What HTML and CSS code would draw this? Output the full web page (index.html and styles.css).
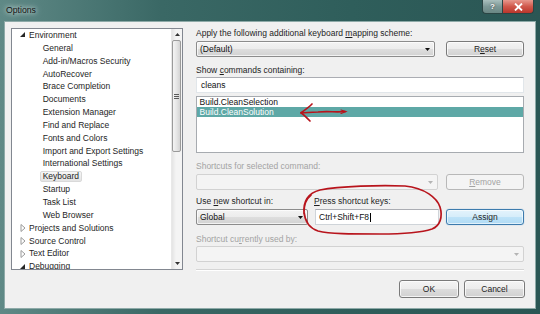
FILE: index.html
```html
<!DOCTYPE html>
<html>
<head>
<meta charset="utf-8">
<link rel="stylesheet" href="styles.css">
</head>
<body>
<div class="window">
  <div class="titlebar">
    <span class="title">Options</span>
    <div class="caption">
      <div class="cbtn help">?</div>
      <div class="cbtn close"><svg width="9" height="8" viewBox="0 0 9 8"><path d="M1 0.5 L8 7.5 M8 0.5 L1 7.5" stroke="#fff" stroke-width="1.8"/></svg></div>
    </div>
  </div>
  <div class="client">
    <div class="main">
      <div class="tree">
        <div class="tree-items">
          <div class="row l0"><svg class="exp" width="6" height="6" viewBox="0 0 6 6"><polygon points="5,0 5,5 0,5" fill="#262626"/></svg><span>Environment</span></div>
          <div class="row l1">General</div>
          <div class="row l1">Add-in/Macros Security</div>
          <div class="row l1">AutoRecover</div>
          <div class="row l1">Brace Completion</div>
          <div class="row l1">Documents</div>
          <div class="row l1">Extension Manager</div>
          <div class="row l1">Find and Replace</div>
          <div class="row l1">Fonts and Colors</div>
          <div class="row l1">Import and Export Settings</div>
          <div class="row l1">International Settings</div>
          <div class="row l1"><span class="sel">Keyboard</span></div>
          <div class="row l1">Startup</div>
          <div class="row l1">Task List</div>
          <div class="row l1">Web Browser</div>
          <div class="row l0"><svg class="exp" width="6" height="8" viewBox="0 0 6 8"><polygon points="1,0.5 5,4 1,7.5" fill="none" stroke="#9a9a9a" stroke-width="1"/></svg><span>Projects and Solutions</span></div>
          <div class="row l0"><svg class="exp" width="6" height="8" viewBox="0 0 6 8"><polygon points="1,0.5 5,4 1,7.5" fill="none" stroke="#9a9a9a" stroke-width="1"/></svg><span>Source Control</span></div>
          <div class="row l0"><svg class="exp" width="6" height="8" viewBox="0 0 6 8"><polygon points="1,0.5 5,4 1,7.5" fill="none" stroke="#9a9a9a" stroke-width="1"/></svg><span>Text Editor</span></div>
          <div class="row l0"><svg class="exp" width="6" height="6" viewBox="0 0 6 6"><polygon points="5,0 5,5 0,5" fill="#262626"/></svg><span>Debugging</span></div>
        </div>
        <div class="vscroll">
          <div class="sarrow"><svg width="5" height="3" viewBox="0 0 5 3"><polygon points="0,3 5,3 2.5,0" fill="#333"/></svg></div>
          <div class="thumb"><div class="grip"></div></div>
          <div class="track"></div>
          <div class="sarrow"><svg width="5" height="3" viewBox="0 0 5 3"><polygon points="0,0 5,0 2.5,3" fill="#333"/></svg></div>
        </div>
      </div>
      <div class="panel">
        <div class="lbl">Apply the following additional keyboard <u>m</u>apping scheme:</div>
        <div class="crow r1">
          <div class="combo w239"><span>(Default)</span><svg width="5" height="3" viewBox="0 0 5 3"><polygon points="0,0 5,0 2.5,3" fill="#111"/></svg></div>
          <div class="btn w78">R<u>e</u>set</div>
        </div>
        <div class="lbl m7">Show <u>c</u>ommands containing:</div>
        <div class="input m1">cleans</div>
        <div class="list">
          <div class="item">Build.CleanSelection</div>
          <div class="item hi">Build.CleanSolution</div>
        </div>
        <div class="lbl dis m7">Shortcuts for selected command:</div>
        <div class="crow r1">
          <div class="combo disabled w242"><span></span><svg width="5" height="3" viewBox="0 0 5 3"><polygon points="0,0 5,0 2.5,3" fill="#b4b4b4"/></svg></div>
          <div class="btn disabled w78"><u>R</u>emove</div>
        </div>
        <div class="grid3">
          <div class="lbl">Use <u>n</u>ew shortcut in:</div>
          <div class="lbl"><u>P</u>ress shortcut keys:</div>
          <div></div>
          <div class="combo"><span>Global</span><svg width="5" height="3" viewBox="0 0 5 3"><polygon points="0,0 5,0 2.5,3" fill="#111"/></svg></div>
          <div class="input keys">Ctrl+Shift+F8<span class="caret"></span></div>
          <div class="btn assign">Assign</div>
        </div>
        <div class="lbl dis m8">Shortcut cu<u>r</u>rently used by:</div>
        <div class="combo disabled full m1"><span></span><svg width="5" height="3" viewBox="0 0 5 3"><polygon points="0,0 5,0 2.5,3" fill="#b4b4b4"/></svg></div>
        <div class="sep"></div>
      </div>
    </div>
    <div class="footer">
      <div class="btn ok">OK</div>
      <div class="btn cancel">Cancel</div>
    </div>
  </div>
  <svg class="annot" width="540" height="314" viewBox="0 0 540 314">
    <path d="M345,111.5 C337,112.5 328,111 318,112 C311,112.5 305,112.8 301,112.8" fill="none" stroke="#b8141c" stroke-width="1.7" stroke-linecap="round"/>
    <path d="M341,110 L346,111.5 L341,113.5" fill="none" stroke="#b8141c" stroke-width="1.1" stroke-linecap="round"/>
    <path d="M312,104 C309,107 305,110 301,112.8 C304,115 307,118 310,121" fill="none" stroke="#b8141c" stroke-width="1.7" stroke-linecap="round" stroke-linejoin="round"/>
    <path d="M304,214 C303,202 308,193 320,190 C340,186 380,185 405,186 C425,188 437,198 440,207 C443,217 440,226 432,229 C420,233 400,234 380,234 C350,234 330,234 318,231 C309,228 305,222 304,212 C304,205 306,199 311,195" fill="none" stroke="#b8141c" stroke-width="1.7" stroke-linecap="round"/>
  </svg>
</div>
</body>
</html>
```

FILE: styles.css
```css
* { box-sizing: border-box; }
html, body { margin: 0; padding: 0; }
body {
  width: 540px;
  height: 314px;
  overflow: hidden;
  font-family: "Liberation Sans", Arial, sans-serif;
  font-size: 8.5px;
  color: #1e1e1e;
  background: #3f6d6b;
}
u { text-decoration: underline; text-underline-offset: 1px; }

.window {
  position: relative;
  width: 540px;
  height: 314px;
  display: flex;
  flex-direction: column;
  padding: 0 5px 6px 5px;
  background: linear-gradient(to right, #5f8986 0%, #3a6865 30%, #2f5e5b 65%, #2a5654 100%);
}

.titlebar {
  height: 22px;
  flex: none;
  display: flex;
  justify-content: space-between;
  align-items: flex-start;
}
.title {
  margin: 4px 0 0 1px;
  font-size: 8.7px;
  line-height: 12px;
  color: #141414;
  text-shadow: 0 0 4px #d6e4e2, 0 0 7px #c8dad8;
}
.caption { display: flex; margin-right: 1px; }
.cbtn {
  height: 14px;
  display: flex;
  align-items: center;
  justify-content: center;
  border: 1px solid #2b4544;
  border-top: none;
}
.help {
  width: 20px;
  border-radius: 0 0 0 4px;
  border-right: none;
  background: linear-gradient(#a9bfbd, #7d9997 50%, #6a8784);
  color: #fff;
  font-size: 8px;
  font-weight: bold;
  text-shadow: 0 0 2px #333;
}
.close {
  width: 32px;
  border-radius: 0 0 4px 0;
  background: linear-gradient(#e7988d, #d0584b 50%, #b9362c);
}

.client {
  flex: 1;
  background: #f0f0f0;
  padding: 5px 10px 0 6px;
  display: flex;
  flex-direction: column;
  box-shadow: 0 0 0 1px #8eaaa8;
}

.main {
  display: grid;
  grid-template-columns: 172px 328px;
  column-gap: 13px;
}

.tree {
  margin-top: 1px;
  height: 242px;
  border: 1px solid #828790;
  background: #fff;
  display: flex;
  overflow: hidden;
}
.tree-items { flex: 1; min-width: 0; overflow: hidden; }
.row {
  height: 12.85px;
  line-height: 12.85px;
  display: flex;
  align-items: center;
  white-space: nowrap;
  color: #1e1e1e;
}
.row.l0 { padding-left: 8px; }
.row.l0 .exp { width: 6px; margin-right: 3px; flex: none; }
.row.l1 { padding-left: 30.7px; }
.sel {
  margin-left: -3px;
  padding: 0 2px 0 2px;
  line-height: 9px;
  height: 11px;
  background: linear-gradient(#f6f6f6, #e4e4e4);
  border: 1px solid #d9d9d9;
  border-radius: 2px;
}

.vscroll {
  width: 11px;
  flex: none;
  display: flex;
  flex-direction: column;
  background: linear-gradient(to right, #e4e4e4, #f4f4f4 40%, #f4f4f4);
  border-left: 1px solid #e8e8e8;
}
.sarrow {
  height: 11px;
  flex: none;
  display: flex;
  align-items: center;
  justify-content: center;
}
.thumb {
  height: 112px;
  margin: 0 1px 0 0;
  border: 1px solid #9a9a9a;
  border-radius: 2px;
  background: linear-gradient(to right, #f4f4f4, #e6e6e6 50%, #d4d4d4);
  display: flex;
  align-items: center;
  justify-content: center;
}
.grip {
  width: 5px;
  height: 5px;
  background: repeating-linear-gradient(#5a5a5a 0 1px, transparent 1px 2px);
}
.track { flex: 1; }

.panel { display: flex; flex-direction: column; }
.lbl { height: 12px; line-height: 12px; white-space: nowrap; color: #1e1e1e; }
.lbl.dis { color: #a3a3a3; }
.m7 { margin-top: 7px; }
.m8 { margin-top: 8px; }
.m1 { margin-top: 1px; }

.crow {
  display: flex;
  justify-content: space-between;
  margin-top: 2px;
}

.combo {
  height: 16px;
  border: 1px solid #8c8c8c;
  border-radius: 2px;
  background: linear-gradient(#f3f3f3 0%, #ececec 50%, #dedede 50%, #d2d2d2 100%);
  box-shadow: inset 0 0 0 1px rgba(255,255,255,0.7);
  display: flex;
  align-items: center;
  justify-content: space-between;
  padding: 0 4px 0 3px;
  color: #111;
}
.combo.disabled {
  background: #f4f4f4;
  border-color: #d2d2d2;
  box-shadow: none;
}
.w239 { width: 239px; }
.w242 { width: 242px; }
.w78 { width: 78px; }
.full { width: 328px; }

.btn {
  height: 16px;
  border: 1px solid #7a7a7a;
  border-radius: 3px;
  background: linear-gradient(#f4f4f4 0%, #ececec 50%, #dddddd 50%, #d1d1d1 100%);
  box-shadow: inset 0 0 0 1px rgba(255,255,255,0.75);
  display: flex;
  align-items: center;
  justify-content: center;
  color: #1e1e1e;
}
.btn.disabled {
  background: #f4f4f4;
  border-color: #b8b8b8;
  color: #a3a3a3;
  box-shadow: none;
}
.btn.assign {
  border-color: #3d7bad;
  background: linear-gradient(#e4f3fc 0%, #d6edfa 50%, #bfe3f8 50%, #b0dbf5 100%);
  box-shadow: inset 0 0 0 1px rgba(255,255,255,0.6), 0 0 1px #6aa6d4;
}

.input {
  height: 16px;
  background: #fff;
  border: 1px solid #e1e6ea;
  border-top-color: #abadb3;
  display: flex;
  align-items: center;
  padding-left: 4px;
  color: #111;
}
.input.keys { padding-left: 3px; border-color: #cfd4d9; border-top-color: #abadb3; }
.caret { width: 1px; height: 9px; background: #000; margin-left: 1px; }

.list {
  margin-top: 3px;
  height: 57px;
  background: #fff;
  border: 1px solid #a7abb0;
  padding: 0;
}
.item {
  height: 10px;
  line-height: 10px;
  padding-left: 2.5px;
  color: #111;
}
.item.hi { background: #5ea8a6; color: #fff; }

.grid3 {
  display: grid;
  grid-template-columns: 112px 124px 78px;
  column-gap: 7px;
  row-gap: 2px;
  margin-top: 5px;
}
.grid3 .lbl { overflow: visible; }
.grid3 .lbl:nth-child(2) { margin-left: -1px; }
.grid3 .combo { width: 112px; }

.sep {
  margin-top: 7px;
  height: 1px;
  background: #d5d5d5;
  border-bottom: 1px solid #fff;
  box-sizing: content-box;
}

.footer {
  display: flex;
  justify-content: flex-end;
  gap: 5px;
  margin-top: 9px;
}
.footer .btn { height: 18px; }
.ok { width: 60px; }
.cancel { width: 61px; }

.annot {
  position: absolute;
  left: 0;
  top: 0;
  pointer-events: none;
}
```
